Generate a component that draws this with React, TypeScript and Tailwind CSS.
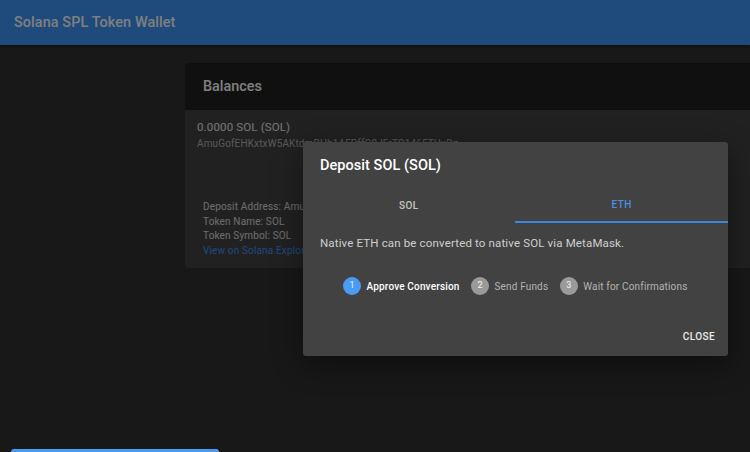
export default function App() {
  const steps = [
    { n: "1", label: "Approve Conversion", active: true },
    { n: "2", label: "Send Funds", active: false },
    { n: "3", label: "Wait for Confirmations", active: false },
  ];
  return (
    <div className="relative h-[452px] w-[750px] overflow-hidden bg-[#303030] font-['Roboto',sans-serif] text-white">
      <header className="flex h-[45px] items-center bg-[#3c94f8] px-[14px] shadow-[0_1px_3px_rgba(0,0,0,0.5)]">
        <h1 className="text-[14.4px] font-medium tracking-[0.1px]">Solana SPL Token Wallet</h1>
      </header>
      <main className="flex pl-[185px] pt-[18px]">
        <section className="h-[205px] w-[600px] shrink-0 overflow-hidden rounded-[3px] bg-[#424242]">
          <div className="flex h-[47px] items-center bg-[#212121] px-[18px] text-[14.4px] font-medium">Balances</div>
          <div className="px-[12px] pt-[10px]">
            <div className="text-[11.5px] leading-[15px] tracking-[0.15px] text-white/90">0.0000 SOL (SOL)</div>
            <div className="mt-[2px] whitespace-nowrap text-[10px] leading-[14px] tracking-[0.13px] text-white/60">AmuGofEHKxtxW5AKtdmBHh1AFPffG9JFrTQ1465TUuDz</div>
          </div>
          <div className="flex w-[118px] flex-col pl-[18px] pt-[49px] text-[10px] leading-[14.5px] tracking-[0.15px] text-white/80">
            <div className="overflow-hidden whitespace-nowrap">Deposit Address: AmuGofEHKxtxW5AKtdm</div>
            <div>Token Name: SOL</div>
            <div>Token Symbol: SOL</div>
            <div className="overflow-hidden whitespace-nowrap text-[#3c94f8]">View on Solana Explorer</div>
          </div>
        </section>
      </main>
      <div className="absolute inset-0 bg-black/50" />
      <button className="absolute left-[11px] top-[449px] h-[30px] w-[208px] rounded-[3px] bg-[#4a9bf5]" />
      <div className="absolute left-[302.5px] top-[142px] flex h-[214px] w-[425.5px] flex-col rounded-[3px] bg-[#424242] shadow-[0_8px_30px_rgba(0,0,0,0.45)]">
        <h2 className="px-[17.5px] pt-[14px] text-[14.5px] font-medium leading-[19px] tracking-[0.05px]">Deposit SOL (SOL)</h2>
        <div className="mt-[12px] flex h-[36px] text-[10px] font-medium tracking-[0.45px]">
          <div className="flex flex-1 items-center justify-center pt-px text-white/70">SOL</div>
          <div className="flex flex-1 items-center justify-center border-b-2 border-[#3d85d8] pt-px text-[#4a90e2]">ETH</div>
        </div>
        <p className="px-[17.5px] pt-[12px] text-[11.5px] leading-[16px] tracking-[0.15px] text-white/75">Native ETH can be converted to native SOL via MetaMask.</p>
        <div className="mt-[26px] flex items-center justify-center gap-[11.5px]">
          {steps.map((s) => (
            <div key={s.n} className="flex items-center gap-[5.5px]">
              <span className={s.active ? "flex h-[18px] w-[18px] items-center justify-center rounded-full bg-[#4a9bf5] text-[9px] text-white/90" : "flex h-[18px] w-[18px] items-center justify-center rounded-full bg-[#9a9a9a] text-[9px] text-white/90"}>{s.n}</span>
              <span className={s.active ? "text-[10px] font-medium tracking-[0.16px] text-white" : "text-[10px] tracking-[0.16px] text-white/60"}>{s.label}</span>
            </div>
          ))}
        </div>
        <div className="mt-auto flex justify-end px-[13px] pb-[12px]">
          <button className="text-[10px] font-medium tracking-[0.4px] text-white/90">CLOSE</button>
        </div>
      </div>
    </div>
  );
}
